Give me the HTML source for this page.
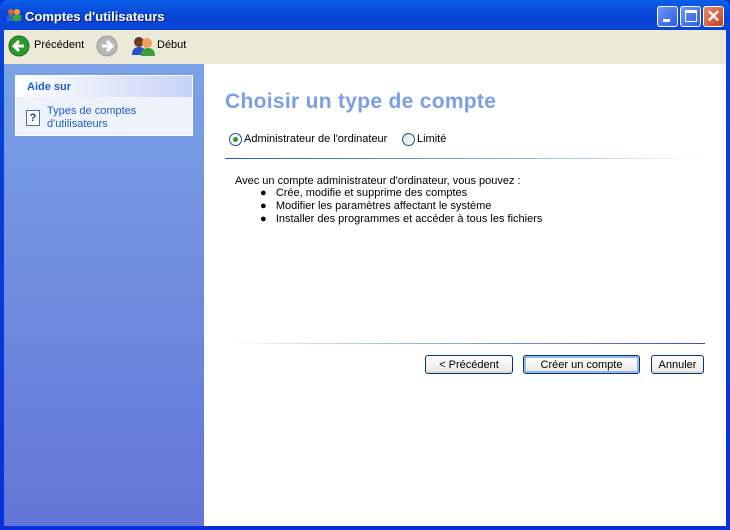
<!DOCTYPE html>
<html><head><style>
*{margin:0;padding:0;box-sizing:border-box}
body{width:730px;height:530px;overflow:hidden;font-family:"Liberation Sans",sans-serif;font-size:11px;background:#0831d9}
.win{position:absolute;left:0;top:0;width:730px;height:530px;background:linear-gradient(#0a5fe8,#0845d6 15px,#0831d9);border-radius:7px 7px 0 0}
.title{position:absolute;left:25px;top:9px;color:#fff;font-weight:bold;font-size:13px;text-shadow:1px 1px #0a1e7a}
.tb{position:absolute;top:6px;width:21px;height:21px;border:1px solid #fff;border-radius:3px;background:linear-gradient(135deg,#6f96f5,#2c5ce6)}
.client{position:absolute;left:4px;top:30px;width:722px;height:496px;background:#fff}
.toolbar{position:absolute;left:0;top:0;width:722px;height:34px;background:#ece9d8}
.side{position:absolute;left:0;top:34px;width:200px;height:462px;background:linear-gradient(#7ba2e7,#6375d6)}
.box{position:absolute;left:11px;top:11px;width:178px;height:61px;background:#eef3fb;border:1px solid #fff}
.boxh{height:21px;background:linear-gradient(90deg,#fff,#c6d3f7);color:#215dc6;font-weight:bold;font-size:11px;padding:5px 0 0 11px}
.btn{position:absolute;top:325px;height:19px;border:1px solid #003c74;border-radius:3px;background:linear-gradient(#fff,#ecebe6 85%,#d6d0c5);text-align:center;line-height:18px;font-size:11px}
</style></head><body>
<div class="win">
<svg style="position:absolute;left:6px;top:8px" width="16" height="14"><circle cx="5" cy="4" r="3" fill="#c63"/><rect x="1" y="7" width="8" height="6" fill="#36c"/><circle cx="11" cy="4" r="3" fill="#f93"/><rect x="7" y="7" width="8" height="6" fill="#3a3"/></svg>
<div class="title">Comptes d'utilisateurs</div>
<div class="tb" style="left:657px"><div style="position:absolute;left:5px;top:12px;width:7px;height:3px;background:#fff"></div></div>
<div class="tb" style="left:680px"><div style="position:absolute;left:4px;top:3px;width:12px;height:12px;border:1px solid #fff;border-top-width:3px"></div></div>
<div class="tb" style="left:703px;background:linear-gradient(135deg,#e88a6a,#c8401c)"><div style="color:#fff;font-weight:bold;font-size:17px;text-align:center;line-height:19px;font-family:'Liberation Sans'">✕</div></div>
<div class="client">
<div class="toolbar">
<svg style="position:absolute;left:4px;top:5px" width="22" height="22"><circle cx="11" cy="11" r="10" fill="#2a9a2a" stroke="#1a6a1a"/><path d="M16 11H7M11 6l-5 5 5 5" stroke="#fff" stroke-width="3" fill="none"/></svg>
<div style="position:absolute;left:30px;top:9px">Précédent</div>
<svg style="position:absolute;left:92px;top:5px" width="22" height="22"><circle cx="11" cy="11" r="10" fill="#b8b8b8" stroke="#999"/><path d="M6 11h9M11 6l5 5-5 5" stroke="#fff" stroke-width="3" fill="none"/></svg>
<svg style="position:absolute;left:127px;top:5px" width="24" height="22"><circle cx="8" cy="7" r="5" fill="#6a3a1a"/><path d="M1 20q0-8 7-8t7 8z" fill="#2850c8"/><circle cx="16" cy="8" r="5" fill="#f0a060"/><path d="M10 21q0-8 7-8t7 8z" fill="#3aa03a"/></svg>
<div style="position:absolute;left:153px;top:9px">Début</div>
</div>
<div class="side"><div class="box"><div class="boxh">Aide sur</div>
<div style="position:absolute;left:10px;top:34px;width:14px;height:16px;border:1px solid #4a6ab0;background:#fff;color:#1a3a9a;font-weight:bold;font-size:11px;text-align:center;line-height:14px">?</div>
<div style="position:absolute;left:31px;top:29px;color:#215dc6;line-height:13px">Types de comptes<br>d'utilisateurs</div></div></div>
<div style="position:absolute;left:221px;top:60px;color:#7b9ee6;font-size:21px;font-weight:bold;letter-spacing:0.3px">Choisir un type de compte</div>
<div style="position:absolute;left:225px;top:103px;width:13px;height:13px;border:1px solid #1c5180;border-radius:50%;background:#fff"><div style="margin:3px;width:5px;height:5px;border-radius:50%;background:#21a121"></div></div>
<div style="position:absolute;left:240px;top:103px">Administrateur de l'ordinateur</div>
<div style="position:absolute;left:398px;top:103px;width:13px;height:13px;border:1px solid #1c5180;border-radius:50%;background:linear-gradient(135deg,#ddd,#fff)"></div>
<div style="position:absolute;left:413px;top:103px">Limité</div>
<div style="position:absolute;left:221px;top:128px;width:480px;height:1px;background:linear-gradient(90deg,#215dc6,#8fb0ec 60%,#fff)"></div>
<div style="position:absolute;left:231px;top:145px;line-height:13px">Avec un compte administrateur d'ordinateur, vous pouvez :</div>
<div style="position:absolute;left:256px;top:157px;line-height:13px">●&nbsp;&nbsp;&nbsp;Crée, modifie et supprime des comptes<br>●&nbsp;&nbsp;&nbsp;Modifier les paramètres affectant le système<br>●&nbsp;&nbsp;&nbsp;Installer des programmes et accéder à tous les fichiers</div>
<div style="position:absolute;left:226px;top:313px;width:475px;height:1px;background:linear-gradient(90deg,#fff,#8fb0ec 40%,#215dc6)"></div>
<div class="btn" style="left:421px;width:88px">&lt; Précédent</div>
<div class="btn" style="left:519px;width:117px;box-shadow:inset 0 0 0 2px #98b8ea">Créer un compte</div>
<div class="btn" style="left:647px;width:53px">Annuler</div>
</div></div>
</body></html>
